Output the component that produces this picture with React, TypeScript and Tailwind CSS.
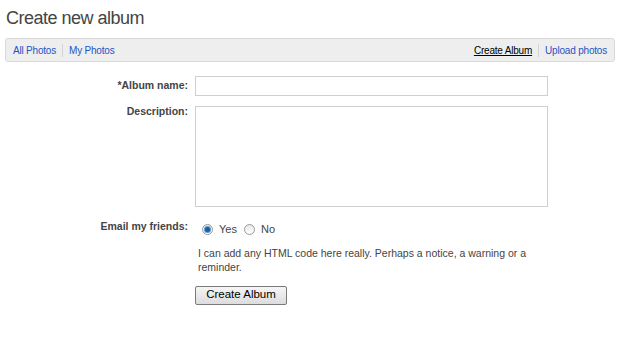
import React from 'react';

const Radio = ({ checked }: { checked?: boolean }) => (
  <span className="flex h-[11px] w-[11px] items-center justify-center rounded-full border border-[#9a9a9a] bg-gradient-to-b from-[#e8e8e8] to-white">
    {checked && <span className="h-[5px] w-[5px] rounded-full bg-[#1f5f9e] shadow-[0_0_0_1px_#5b9bd5]" />}
  </span>
);

const App = () => {
  return (
    <div className="h-[349px] w-[620px] bg-white font-['Liberation_Sans',Arial,sans-serif] text-[#444]">
      <h1 className="px-[6px] pt-[6px] text-[18px] leading-[24px] tracking-[-0.5px] text-[#444]">Create new album</h1>

      <div className="mx-[5px] mt-[8px] flex h-[24px] items-center justify-between rounded-[3px] border border-[#d9d9d9] bg-[#eeeeee] px-[7px] text-[10px] tracking-[-0.2px]">
        <div className="flex items-center">
          <a className="text-[#2255c4]">All Photos</a>
          <span className="mx-[6px] h-[13px] w-px bg-[#d4d4d4]" />
          <a className="text-[#2255c4]">My Photos</a>
        </div>
        <div className="flex items-center">
          <a className="text-black underline">Create Album</a>
          <span className="mx-[6px] h-[13px] w-px bg-[#d4d4d4]" />
          <a className="text-[#2255c4]">Upload photos</a>
        </div>
      </div>

      <form className="mt-[14px] grid grid-cols-[188px_353px] gap-x-[7px] text-[10.5px]">
        <label className="pt-[2px] text-right font-bold text-[#444]">*Album name:</label>
        <input className="h-[20px] border border-[#cfcfcf] px-1 outline-none" />

        <label className="mt-[8px] text-right font-bold text-[#444]">Description:</label>
        <textarea className="mt-[10px] h-[101px] resize-none border border-[#cfcfcf] outline-none" />

        <label className="mt-[12px] text-right font-bold text-[#444]">Email my friends:</label>
        <div className="mt-[14px] flex items-center pl-[7px] text-[11px]">
          <Radio checked />
          <span className="ml-[6px]">Yes</span>
          <span className="ml-[7px]"><Radio /></span>
          <span className="ml-[6px]">No</span>
        </div>

        <div />
        <p className="mt-[8px] w-[345px] pl-[3px] text-[10.5px] leading-[14px] text-[#444]">
          I can add any HTML code here really. Perhaps a notice, a warning or a reminder.
        </p>

        <div />
        <div className="mt-[12px]">
          <button type="button" className="h-[19px] w-[92px] rounded-[2px] border border-[#7a7a7a] bg-gradient-to-b from-[#f6f6f6] to-[#dcdcdc] text-[11.5px] leading-none text-black">
            Create Album
          </button>
        </div>
      </form>
    </div>
  );
};

export default App;
